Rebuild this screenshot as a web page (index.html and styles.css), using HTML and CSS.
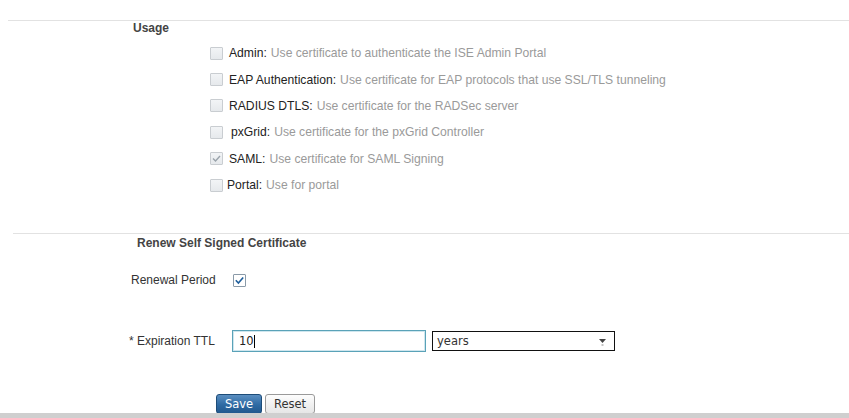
FILE: index.html
```html
<!DOCTYPE html>
<html lang="en">
<head>
<meta charset="UTF-8" />
<title>Certificate Usage</title>
<link rel="stylesheet" href="styles.css">
</head>
<body>

<div class="usage-section">
  <h3 class="section-title usage-title">Usage</h3>
  <ul class="usage-list">
    <li><span class="check"></span><b>Admin:</b> <span class="desc">Use certificate to authenticate the ISE Admin Portal</span></li>
    <li><span class="check"></span><b>EAP Authentication:</b> <span class="desc">Use certificate for EAP protocols that use SSL/TLS tunneling</span></li>
    <li><span class="check"></span><b>RADIUS DTLS:</b> <span class="desc">Use certificate for the RADSec server</span></li>
    <li><span class="check"></span><b class="shift-r">pxGrid:</b> <span class="desc">Use certificate for the pxGrid Controller</span></li>
    <li><span class="check checked-dim"><svg viewBox="0 0 13 13" width="13" height="13"><path d="M3 6.5l2.5 2.5 4.5-5" fill="none" stroke="#9aa3ab" stroke-width="1.4"/></svg></span><b>SAML:</b> <span class="desc">Use certificate for SAML Signing</span></li>
    <li><span class="check"></span><b class="shift-l">Portal:</b> <span class="desc">Use for portal</span></li>
  </ul>
</div>

<div class="renew-section">
  <h3 class="section-title renew-title">Renew Self Signed Certificate</h3>

  <div class="form-row renewal-row">
    <span class="row-label">Renewal Period</span>
    <span class="check checked"><svg viewBox="0 0 13 13" width="13" height="13"><path d="M2.8 6.3l2.6 2.8 4.8-5.6" fill="none" stroke="#1f5f9c" stroke-width="1.6"/></svg></span>
  </div>

  <div class="form-row ttl-row">
    <span class="row-label ttl-label">* Expiration TTL</span>
    <span class="text-input">10<span class="caret"></span></span>
    <span class="select-box">years<svg class="arrow" viewBox="0 0 9 9" width="9" height="9"><path d="M1 2h7L4.5 6z" fill="#444"/><path d="M3.5 8h2" stroke="#888" stroke-width="1"/></svg></span>
  </div>

  <div class="actions">
    <button class="btn btn-save">Save</button>
    <button class="btn btn-reset">Reset</button>
  </div>
</div>

<div class="bottom-bar"></div>

</body>
</html>
```

FILE: styles.css
```css
* {
  box-sizing: border-box;
}
html, body {
  margin: 0;
  padding: 0;
  height: 100%;
  overflow: hidden;
  background: #fff;
  font-family: "Liberation Sans", Arial, sans-serif;
  font-size: 12px;
  color: #333;
}

/* Section headings */
.section-title {
  margin: 0;
  font-size: 12px;
  line-height: 14px;
  font-weight: bold;
  color: #444;
}

/* Usage */
.usage-section {
  margin: 20px 0 0 8px;
  border-top: 1px solid #e2e2e2;
  padding-bottom: 35px;
}
.usage-title {
  padding-left: 125px;
}
.usage-list {
  list-style: none;
  margin: 5px 0 0 0;
  padding: 0 0 0 202px;
  font-size: 12.15px;
}
.usage-list li {
  display: flex;
  align-items: center;
  height: 26.4px;
  white-space: nowrap;
}
.usage-list b {
  font-weight: normal;
  color: #222;
  margin-left: 6px;
  margin-right: 4px;
}
.usage-list b.shift-r {
  margin-left: 8px;
}
.usage-list b.shift-l {
  margin-left: 4px;
}
.desc {
  color: #9a9a9a;
}

/* checkboxes */
.check {
  display: inline-block;
  width: 13px;
  height: 13px;
  border: 1px solid #c9cdd1;
  background: linear-gradient(#f2f4f6, #e6e9ec);
  border-radius: 1px;
  position: relative;
  flex: none;
}
.check svg {
  position: absolute;
  left: -1px;
  top: -1px;
}
.check.checked {
  border-color: #8a9aa8;
  background: #fff;
}

/* Renew */
.renew-section {
  margin-left: 13px;
  border-top: 1px solid #e2e2e2;
}
.renew-title {
  padding-left: 124px;
  padding-top: 2px;
}
.form-row {
  display: flex;
  align-items: center;
  padding-left: 118px;
}
.renewal-row {
  margin-top: 20px;
  height: 20px;
}
.row-label {
  color: #333;
  width: 102px;
}
.ttl-row {
  margin-top: 40px;
  height: 22px;
}
.ttl-label {
  margin-left: -2px;
  width: 103px;
}
.text-input {
  display: flex;
  align-items: center;
  width: 194px;
  height: 22px;
  border: 1px solid #5aa2b8;
  box-shadow: inset 0 0 0 1px #cfe6ee;
  padding-left: 6px;
  font-family: "DejaVu Sans", sans-serif;
  font-size: 11.5px;
  color: #222;
}
.caret {
  display: inline-block;
  width: 1px;
  height: 13px;
  background: #000;
}
.select-box {
  position: relative;
  display: flex;
  align-items: center;
  width: 183px;
  height: 20px;
  margin-left: 6px;
  border: 1px solid #111;
  padding-left: 4px;
  font-family: "DejaVu Sans", sans-serif;
  font-size: 11.5px;
  color: #333;
}
.select-box .arrow {
  position: absolute;
  right: 7px;
  top: 5px;
}

/* Buttons */
.actions {
  display: flex;
  gap: 3px;
  padding-left: 203px;
  margin-top: 42px;
}
.btn {
  height: 20px;
  padding: 0;
  font-family: "DejaVu Sans", sans-serif;
  font-size: 11.5px;
  border-radius: 3px;
  cursor: pointer;
}
.btn-save {
  width: 46px;
  color: #fff;
  border: 1px solid #1d4c78;
  background: linear-gradient(#5a8ec0, #2e6aa3 55%, #22588e);
}
.btn-reset {
  width: 50px;
  color: #333;
  border: 1px solid #9a9a9a;
  background: linear-gradient(#fdfdfd, #e6e6e6);
}

.bottom-bar {
  position: fixed;
  left: 0;
  right: 0;
  bottom: 0;
  height: 5px;
  background: #cfcfcf;
}
```
